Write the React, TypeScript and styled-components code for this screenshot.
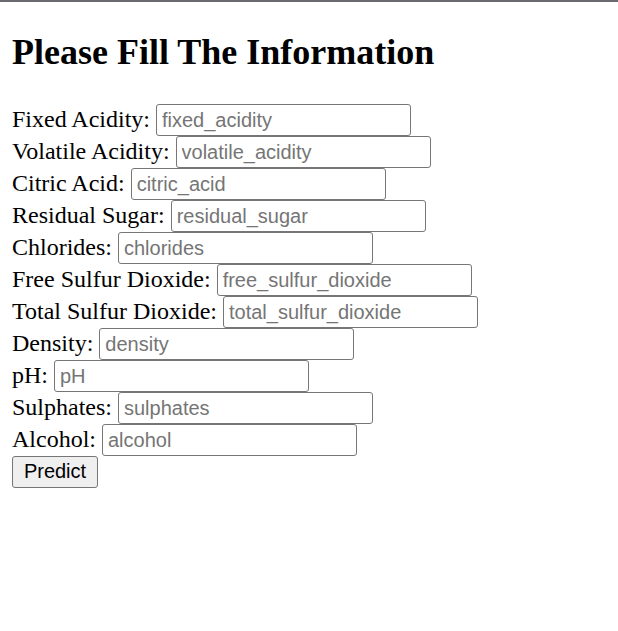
import React from "react";
import styled, { createGlobalStyle } from "styled-components";

const GlobalStyle = createGlobalStyle`
  html, body { margin: 0; padding: 0; background: #ffffff; }
  body { font-family: "Liberation Serif", "Times New Roman", serif; color: #000000; }
`;

const TopRule = styled.div`
  height: 2px;
  background: #696b70;
`;

const Page = styled.main`
  padding: 30px 12px 12px;
`;

const Heading = styled.h2`
  margin: 0 0 31px;
  font-family: "Liberation Serif", "Times New Roman", serif;
  font-size: 36px;
  line-height: 41px;
  font-weight: 700;
`;

const Form = styled.form`
  display: flex;
  flex-direction: column;
  align-items: flex-start;
`;

const Row = styled.div`
  display: flex;
  align-items: baseline;
  gap: 6px;
  height: 32px;
`;

const Label = styled.label`
  font-size: 24px;
  line-height: 27px;
  white-space: nowrap;
`;

const Input = styled.input`
  box-sizing: border-box;
  width: 255px;
  height: 32px;
  margin: 0;
  padding: 0 4px 0 5px;
  border: 1px solid #767676;
  border-radius: 3px;
  background: #ffffff;
  font-family: "Liberation Sans", Arial, sans-serif;
  font-size: 20px;
  color: #000000;
  &::placeholder { color: #757575; }
`;

const Button = styled.button`
  box-sizing: border-box;
  height: 32px;
  width: 86px;
  margin: 0;
  padding: 0 0 1px;
  border: 1px solid #767676;
  border-radius: 3px;
  background: #efefef;
  font-family: "Liberation Sans", Arial, sans-serif;
  font-size: 20px;
  color: #000000;
`;

const fields: [string, string][] = [
  ["Fixed Acidity:", "fixed_acidity"],
  ["Volatile Acidity:", "volatile_acidity"],
  ["Citric Acid:", "citric_acid"],
  ["Residual Sugar:", "residual_sugar"],
  ["Chlorides:", "chlorides"],
  ["Free Sulfur Dioxide:", "free_sulfur_dioxide"],
  ["Total Sulfur Dioxide:", "total_sulfur_dioxide"],
  ["Density:", "density"],
  ["pH:", "pH"],
  ["Sulphates:", "sulphates"],
  ["Alcohol:", "alcohol"],
];

export default function App() {
  return (
    <>
      <GlobalStyle />
      <TopRule />
      <Page>
        <Heading>Please Fill The Information</Heading>
        <Form onSubmit={(e) => e.preventDefault()}>
          {fields.map(([label, name]) => (
            <Row key={name}>
              <Label htmlFor={name}>{label}</Label>
              <Input id={name} name={name} placeholder={name} />
            </Row>
          ))}
          <Button type="submit">Predict</Button>
        </Form>
      </Page>
    </>
  );
}
